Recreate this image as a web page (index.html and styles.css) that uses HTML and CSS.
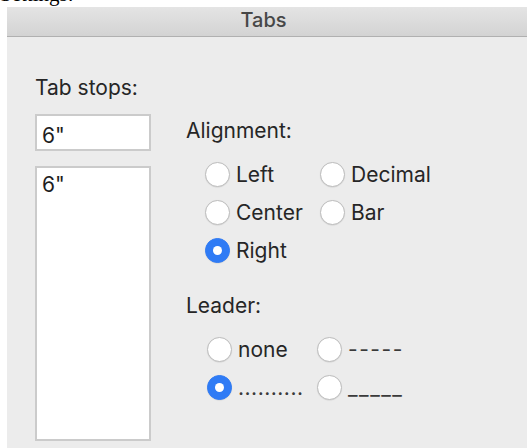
FILE: index.html
```html
<!DOCTYPE html>
<html lang="en">
<head>
<meta charset="utf-8">
<title>Tabs</title>
<link rel="stylesheet" href="styles.css">
</head>
<body>
  <p class="doc-heading">Settings:</p>

  <section class="dialog">
    <header class="titlebar">Tabs</header>

    <div class="dialog-body">
      <div class="stops">
        <div class="field-label">Tab stops:</div>
        <div class="stop-input">6"</div>
        <ul class="stop-list">
          <li>6"</li>
        </ul>
      </div>

      <div class="options">
        <div class="group-label">Alignment:</div>
        <div class="radio-grid align-grid">
          <label class="radio-item"><span class="radio"></span><span>Left</span></label>
          <label class="radio-item"><span class="radio"></span><span>Decimal</span></label>
          <label class="radio-item"><span class="radio"></span><span>Center</span></label>
          <label class="radio-item"><span class="radio"></span><span>Bar</span></label>
          <label class="radio-item"><span class="radio checked"></span><span>Right</span></label>
        </div>

        <div class="group-label leader-label">Leader:</div>
        <div class="radio-grid leader-grid">
          <label class="radio-item"><span class="radio"></span><span>none</span></label>
          <label class="radio-item"><span class="radio"></span><span class="leader-sample">-----</span></label>
          <label class="radio-item"><span class="radio checked"></span><span class="leader-sample dots">..........</span></label>
          <label class="radio-item"><span class="radio"></span><span class="leader-sample">_____</span></label>
        </div>
      </div>
    </div>
  </section>
</body>
</html>
```

FILE: styles.css
```css
html, body {
  margin: 0;
  padding: 0;
  background: #ffffff;
  overflow: hidden;
}

/* document text that sits above the dialog */
.doc-heading {
  margin: -16px 0 0 0;
  height: 23px;
  font-family: "Liberation Serif", "Times New Roman", serif;
  font-size: 21px;
  line-height: 21px;
  color: #000;
}

.dialog {
  margin-left: 7px;
  height: 441px;
  background: #ececec;
  font-family: Inter, "Noto Sans", sans-serif;
  color: #262626;
}

.titlebar {
  box-sizing: border-box;
  height: 30px;
  padding-right: 7px;
  background: linear-gradient(#e4e4e4, #d3d3d3);
  border-bottom: 1px solid #b0b0b0;
  text-align: center;
  font-size: 20px;
  font-weight: 500;
  line-height: 26px;
  color: #474747;
}

.dialog-body {
  display: flex;
  gap: 35px;
  padding: 38px 0 0 28px;
  font-size: 21px;
  line-height: 25px;
}

/* left column: tab stop entry and list */
.stops {
  display: flex;
  flex-direction: column;
  width: 116px;
}

.field-label {
  margin-bottom: 14px;
}

.stop-input {
  box-sizing: border-box;
  height: 37px;
  padding: 7px 5px 3px;
  background: #fff;
  border: 2px solid #cbcbcb;
  color: #1e1e1e;
}

.stop-list {
  box-sizing: border-box;
  height: 275px;
  margin: 15px 0 0;
  padding: 4px 5px;
  list-style: none;
  background: #fff;
  border: 2px solid #cbcbcb;
  color: #1e1e1e;
}

/* right column: radio groups */
.options {
  padding-top: 43px;
}

.group-label {
  margin-bottom: 12px;
}

.leader-label {
  margin-top: 24px;
}

.radio-grid {
  display: grid;
  grid-auto-rows: 38px;
}

.align-grid {
  padding-left: 19px;
  grid-template-columns: 115px auto;
}

.leader-grid {
  padding-left: 21px;
  grid-template-columns: 110px auto;
}

.radio-item {
  display: flex;
  align-items: center;
  gap: 6px;
  white-space: nowrap;
}

.radio {
  box-sizing: border-box;
  flex: none;
  width: 25px;
  height: 25px;
  border-radius: 50%;
  background: #fff;
  border: 1.5px solid #bdbdbd;
  box-shadow: 0 0.5px 1px rgba(0, 0, 0, 0.12);
  display: flex;
  align-items: center;
  justify-content: center;
}

.radio.checked {
  background: #2f7bf5;
  border-color: #2f7bf5;
}

.radio.checked::after {
  content: "";
  width: 9px;
  height: 9px;
  border-radius: 50%;
  background: #fff;
}

.leader-sample {
  color: #3a3a3a;
  letter-spacing: 1.5px;
}

.leader-sample.dots {
  letter-spacing: 0.5px;
}
```
